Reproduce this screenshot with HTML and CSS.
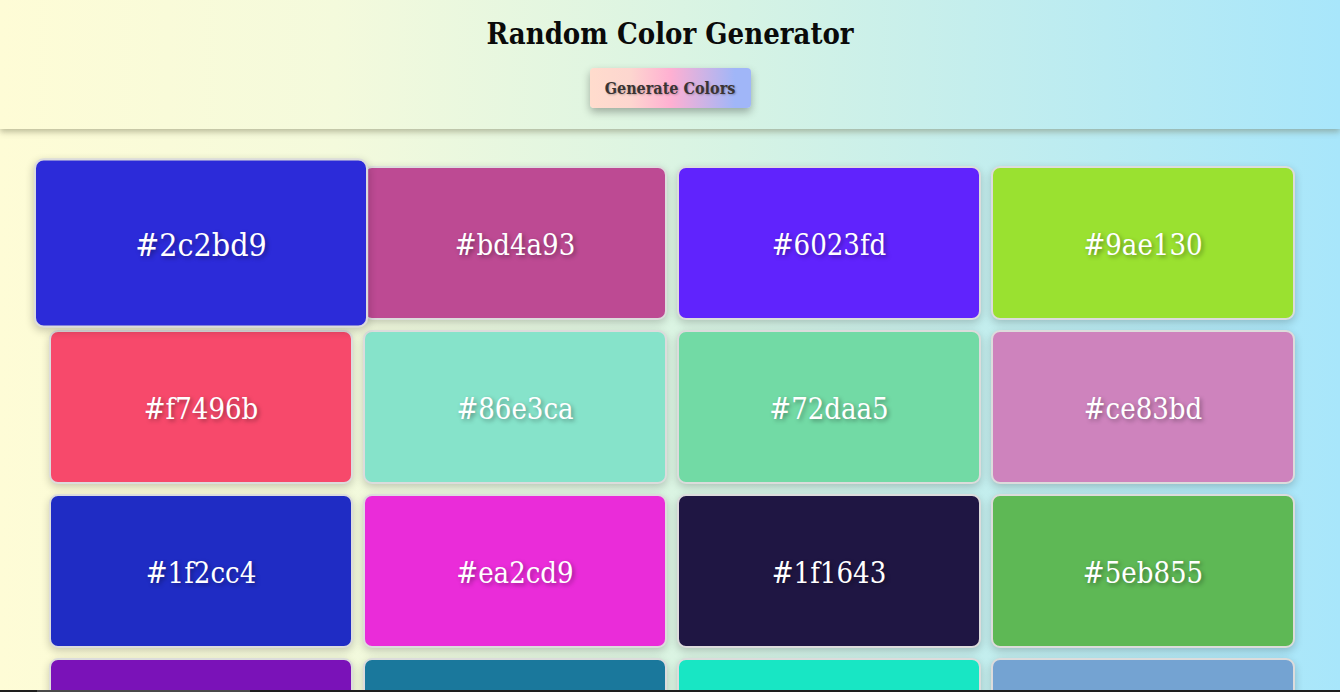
FILE: index.html
```html
<!DOCTYPE html>
<html lang="en">
<head>
<meta charset="utf-8">
<title>Random Color Generator</title>
<link rel="stylesheet" href="styles.css">
</head>
<body>
<header class="header">
  <h1 class="title">Random Color Generator</h1>
  <button class="generate-btn">Generate Colors</button>
</header>
<main class="palette">
  <div class="swatch swatch--active" style="background:#2c2bd9"><span class="hex">#2c2bd9</span></div>
  <div class="swatch" style="background:#bd4a93"><span class="hex">#bd4a93</span></div>
  <div class="swatch" style="background:#6023fd"><span class="hex">#6023fd</span></div>
  <div class="swatch" style="background:#9ae130"><span class="hex">#9ae130</span></div>
  <div class="swatch" style="background:#f7496b"><span class="hex">#f7496b</span></div>
  <div class="swatch" style="background:#86e3ca"><span class="hex">#86e3ca</span></div>
  <div class="swatch" style="background:#72daa5"><span class="hex">#72daa5</span></div>
  <div class="swatch" style="background:#ce83bd"><span class="hex">#ce83bd</span></div>
  <div class="swatch" style="background:#1f2cc4"><span class="hex">#1f2cc4</span></div>
  <div class="swatch" style="background:#ea2cd9"><span class="hex">#ea2cd9</span></div>
  <div class="swatch" style="background:#1f1643"><span class="hex">#1f1643</span></div>
  <div class="swatch" style="background:#5eb855"><span class="hex">#5eb855</span></div>
  <div class="swatch" style="background:#7a12b8"><span class="hex">#7a12b8</span></div>
  <div class="swatch" style="background:#1a789c"><span class="hex">#1a789c</span></div>
  <div class="swatch" style="background:#18e6c4"><span class="hex">#18e6c4</span></div>
  <div class="swatch" style="background:#74a3d2"><span class="hex">#74a3d2</span></div>
</main>
<div class="scrollbar"><div class="scrollbar-thumb"></div></div>
</body>
</html>
```
FILE: styles.css
```css
html, body {
  margin: 0;
  padding: 0;
}
body {
  min-height: 100vh;
  font-family: "DejaVu Serif Condensed", "DejaVu Serif", serif;
  background: linear-gradient(to right, #fefcd6 0%, #f4fadc 25%, #d6f3e4 55%, #a8e6fb 100%);
  background-attachment: fixed;
  overflow: hidden;
}
.header {
  height: 129px;
  box-sizing: border-box;
  display: flex;
  flex-direction: column;
  align-items: center;
  padding-top: 16px;
  box-shadow: 0 3px 6px rgba(110, 110, 80, 0.45);
}
.title {
  margin: 0;
  font-size: 29px;
  line-height: 36px;
  font-weight: bold;
  color: #0a0a0a;
}
.generate-btn {
  margin-top: 16px;
  width: 161px;
  height: 40px;
  border: none;
  border-radius: 4px;
  background: linear-gradient(to right, #ffdccd 0%, #fdd6cf 25%, #ffb0d2 50%, #a0b6f8 90%, #a0b6f8 100%);
  font-family: inherit;
  font-size: 16px;
  font-weight: bold;
  color: #3a3434;
  text-shadow: 1px 1px 2px rgba(0, 0, 0, 0.25);
  box-shadow: 0 4px 8px rgba(0, 0, 0, 0.3);
  cursor: pointer;
}
.palette {
  display: grid;
  grid-template-columns: repeat(4, 304px);
  grid-auto-rows: 154px;
  gap: 10px;
  justify-content: start;
  padding: 37px 0 20px 49px;
}
.swatch {
  box-sizing: border-box;
  border: 2px solid #dcdcdc;
  border-radius: 9px;
  display: flex;
  align-items: center;
  justify-content: center;
  padding-top: 4px;
  box-shadow: 0 3px 8px rgba(0, 0, 0, 0.2);
}
.swatch--active {
  transform: scale(1.1);
  position: relative;
  z-index: 1;
}
.hex {
  color: #ffffff;
  font-size: 29px;
  text-shadow: 2px 2px 4px rgba(0, 0, 0, 0.35);
}
.scrollbar {
  position: fixed;
  left: 0;
  right: 0;
  bottom: 0;
  height: 2px;
  background: #1e1e1e;
}
.scrollbar-thumb {
  margin-left: 37px;
  width: 213px;
  height: 2px;
  background: #4a4a4a;
}
```
